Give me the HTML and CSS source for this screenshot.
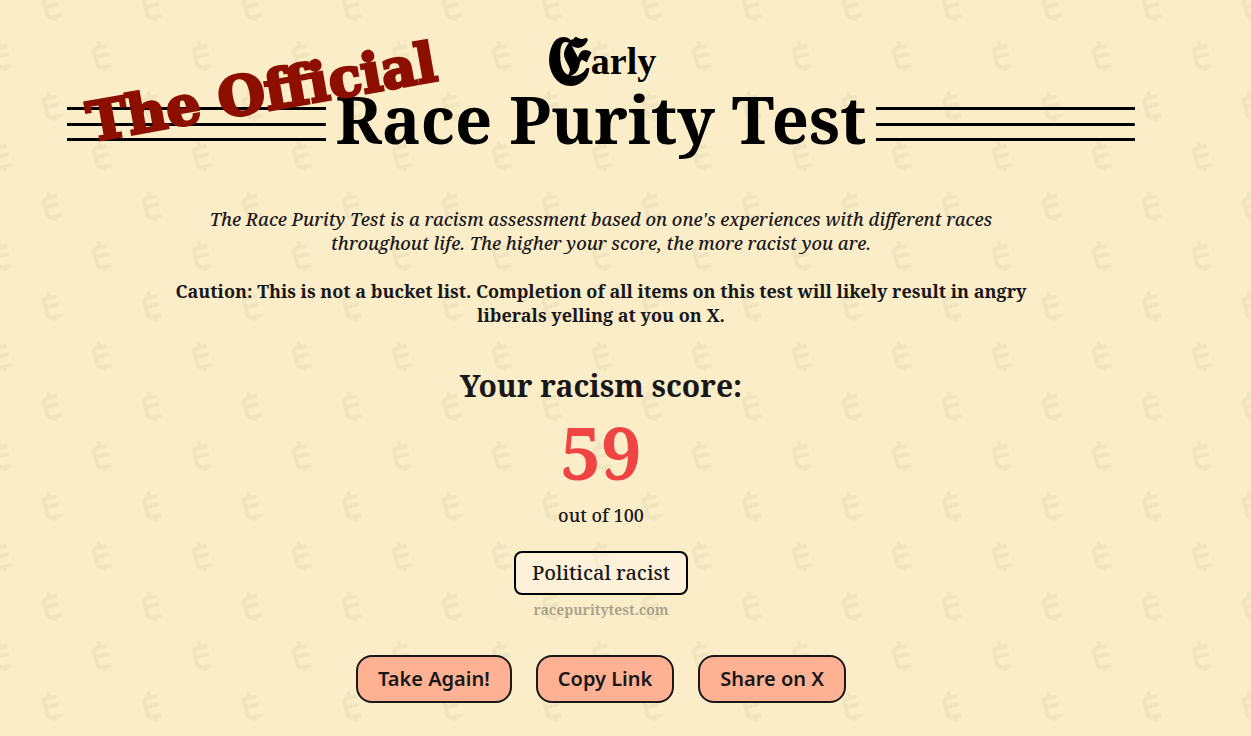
FILE: index.html
```
<!DOCTYPE html>
<html lang="en">
<head>
<meta charset="UTF-8">
<meta name="viewport" content="width=device-width, initial-scale=1">
<title>Race Purity Test</title>
<link rel="stylesheet" href="styles.css">
</head>
<body>

<main class="page">

	<header class="banner">
		<div class="early"><span class="early-cap">&#x1D570;</span>arly</div>
		<div class="title-row">
			<div class="bars"></div>
			<h1>Race Purity Test</h1>
			<div class="bars"></div>
		</div>
		<div class="official">The Official</div>
	</header>

	<section class="intro">
		<p class="about">The Race Purity Test is a racism assessment based on one's experiences with different races throughout life. The higher your score, the more racist you are.</p>
		<p class="caution">Caution: This is not a bucket list. Completion of all items on this test will likely result in angry liberals yelling at you on X.</p>
	</section>

	<section class="result">
		<h2>Your racism score:</h2>
		<div class="score">59</div>
		<div class="out-of">out of 100</div>
		<div class="rank">Political racist</div>
		<div class="site">racepuritytest.com</div>
	</section>

	<div class="buttons">
		<button type="button">Take Again!</button>
		<button type="button">Copy Link</button>
		<button type="button">Share on X</button>
	</div>

</main>

</body>
</html>
```
FILE: styles.css
```
* {
	box-sizing: border-box;
	margin: 0;
}

body {
	padding: 36px 49px 32px 0;
	color: #18181b;
	font-family: "Noto Serif", "Droid Serif", "Liberation Serif", serif;
	font-size: 18px;
	font-weight: 500;
	line-height: 24px;
	text-align: center;
	background-color: #fcedc9;
	background-image: url("data:image/svg+xml,%3Csvg xmlns='http://www.w3.org/2000/svg' width='100' height='100'%3E%3Cdefs%3E%3Cg id='e' fill='none' stroke='%23f1e5bf' stroke-width='4'%3E%3Cpath d='M16 5L7 7Q2.500 8 3 11L6.500 24Q8 27 11 26.500L20.500 24M6 16L18 13M7 0.500L8.500 6M13.500 25L14.500 30'/%3E%3C/g%3E%3C/defs%3E%3Cuse href='%23e' x='91' y='41'/%3E%3Cuse href='%23e' x='-9' y='41'/%3E%3Cuse href='%23e' x='41' y='91'/%3E%3Cuse href='%23e' x='41' y='-9'/%3E%3C/svg%3E");
}

.page {
	display: flex;
	flex-direction: column;
	align-items: center;
}

/* banner */
.banner {
	position: relative;
	width: 100%;
	max-width: 1068px;
	color: #000;
	font-weight: bold;
}

.early {
	display: flex;
	align-items: center;
	justify-content: center;
	font-family: "Liberation Serif", serif;
	font-size: 38px;
	line-height: 51px;
}

.early-cap {
	font-size: 68px;
}

.title-row {
	display: grid;
	grid-template-columns: 1fr auto 1fr;
	align-items: center;
	gap: 10px;
}

h1 {
	padding-bottom: 10px;
	font-size: 65px;
	line-height: 64px;
}

.bars {
	height: 34px;
	border-top: 3px solid #000;
	border-bottom: 3px solid #000;
	background: linear-gradient(#000, #000) center / 100% 3px no-repeat;
}

.official {
	position: absolute;
	top: 26px;
	left: 18px;
	color: #8d0f00;
	font-family: "DejaVu Serif", serif;
	font-size: 54px;
	line-height: 60px;
	white-space: nowrap;
	-webkit-text-stroke: 3px #8d0f00;
	transform: rotate(-10deg);
}

/* text */
.intro {
	width: 100%;
	max-width: 896px;
	padding: 46px 16px 0;
}

.about {
	font-style: italic;
}

.caution {
	margin-top: 24px;
	font-weight: bold;
}

/* score */
.result {
	display: flex;
	flex-direction: column;
	align-items: center;
	margin-top: 41px;
}

h2 {
	font-size: 30px;
	line-height: 36px;
}

.score {
	margin-top: 12px;
	color: #ef4444;
	font-size: 72px;
	font-weight: bold;
	line-height: 72px;
}

.out-of {
	margin-top: 15px;
}

.rank {
	margin-top: 24px;
	padding: 6px 16px;
	border: 2px solid #000;
	border-radius: 8px;
	background: rgba(255, 255, 255, 0.3);
	font-size: 20px;
	line-height: 28px;
}

.site {
	margin-top: 3px;
	font-size: 14px;
	font-weight: bold;
	opacity: 0.35;
}

.buttons {
	display: flex;
	flex-wrap: wrap;
	justify-content: center;
	gap: 24px;
	margin-top: 33px;
}

button {
	padding: 8px 20px;
	border: 2px solid #18181b;
	border-radius: 16px;
	color: #18181b;
	background: #ffb193;
	font-family: "Noto Sans", sans-serif;
	font-size: 20px;
	font-weight: 600;
	line-height: 28px;
	cursor: pointer;
}
```
